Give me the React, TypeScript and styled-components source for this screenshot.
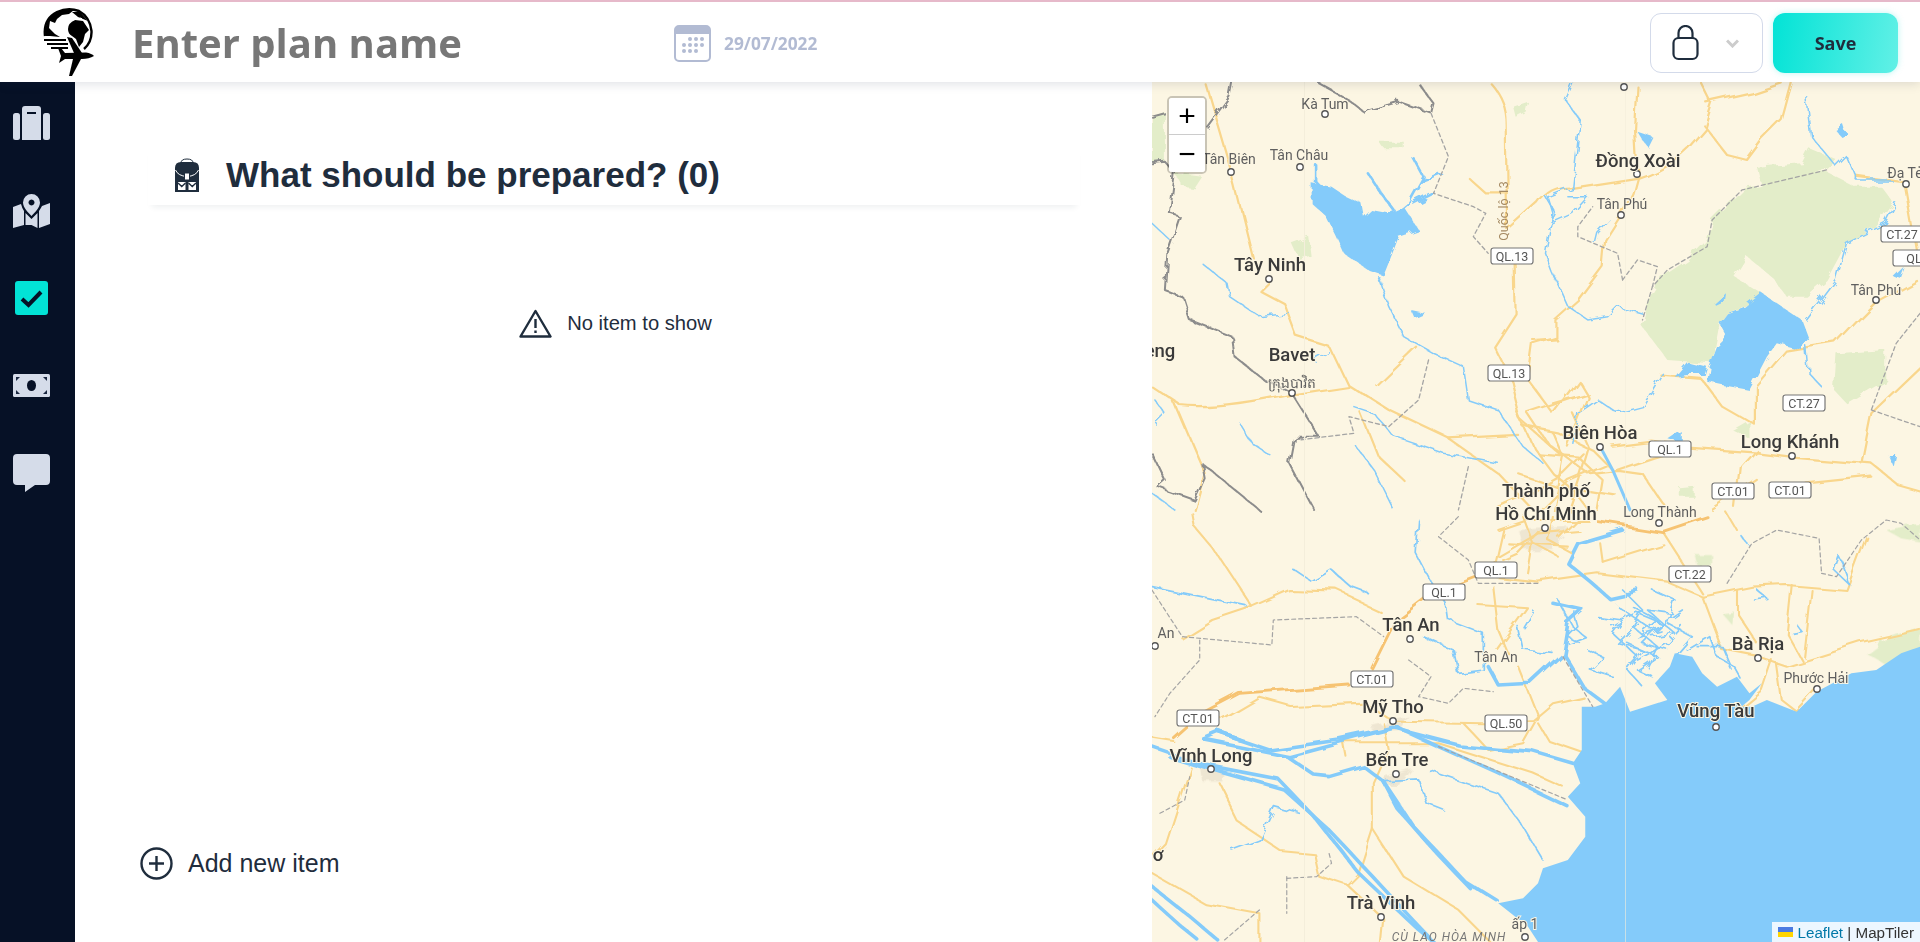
import styled, { createGlobalStyle } from "styled-components";

const GlobalStyle = createGlobalStyle`
  html, body {
    margin: 0;
    padding: 0;
    height: 100%;
    overflow: hidden;
    background: #fff;
    font-family: "Liberation Sans", Arial, sans-serif;
  }
  * { box-sizing: border-box; }
`;

const Page = styled.div`
  display: flex;
  flex-direction: column;
  width: 100%;
  height: 942px;
`;

const Header = styled.header`
  position: relative;
  z-index: 10;
  display: flex;
  align-items: center;
  flex: 0 0 82px;
  height: 82px;
  padding: 2px 22px 0 36px;
  background: #fff;
  border-top: 2px solid #e6b9ca;
  box-shadow: 0 2px 10px rgba(30, 45, 70, 0.14);
`;

const Logo = styled.svg`
  flex: 0 0 64px;
  width: 64px;
  height: 72px;
  margin-top: -2px;
`;

const PlanName = styled.span`
  margin-left: 32px;
  width: 542px;
  font-family: "Open Sans", sans-serif;
  font-size: 40px;
  font-weight: 700;
  color: #777;
  line-height: 1;
`;

const DateBox = styled.div`
  display: flex;
  align-items: center;
  gap: 13px;
  font-family: "Open Sans", sans-serif;
  font-size: 17.3px;
  font-weight: 700;
  color: #b2bbd3;
`;

const HeaderRight = styled.div`
  display: flex;
  align-items: center;
  gap: 10px;
  margin-left: auto;
`;

const PrivacySelect = styled.div`
  display: flex;
  align-items: center;
  justify-content: space-between;
  width: 113px;
  height: 60px;
  padding: 0 23px 0 21px;
  background: #fff;
  border: 1px solid #d3daea;
  border-radius: 11px;
`;

const SaveButton = styled.button`
  width: 125px;
  height: 60px;
  border: none;
  border-radius: 12px;
  background: linear-gradient(100deg, #02e3d6 0%, #62f0e6 100%);
  box-shadow: 0 0 6px rgba(60, 230, 220, 0.35);
  font-family: "Open Sans", sans-serif;
  font-size: 18px;
  font-weight: 700;
  color: #1f2d3d;
`;

const Body = styled.div`
  display: flex;
  flex: 1;
  min-height: 0;
`;

const Sidebar = styled.nav`
  display: flex;
  flex-direction: column;
  flex: 0 0 75px;
  gap: 5.5px;
  background: #061126;
`;

const SideItem = styled.div`
  display: flex;
  align-items: center;
  justify-content: center;
  width: 63px;
  height: 82px;
`;

const Main = styled.main`
  display: flex;
  flex-direction: column;
  flex: 1;
  padding: 63px 72px 62px 73px;
  background: #fff;
  color: #1f2d3d;
`;

const TitleRow = styled.div`
  display: flex;
  align-items: center;
  gap: 27px;
  height: 60px;
  padding-left: 27px;
  box-shadow: 0 6px 6px -4px rgba(30, 45, 70, 0.08);
`;

const Title = styled.h2`
  margin: 0;
  font-size: 35px;
  font-weight: 700;
`;

const EmptyNote = styled.div`
  display: flex;
  align-items: center;
  justify-content: center;
  gap: 15px;
  margin-top: 104px;
  padding-left: 3px;
  font-size: 20.2px;
`;

const AddItem = styled.div`
  display: flex;
  align-items: center;
  gap: 15px;
  margin: auto 0 0 -8px;
  font-size: 25px;
`;

const MapPane = styled.section`
  position: relative;
  flex: 0 0 768px;
  overflow: hidden;
  background: #fcf6e3;
`;

const MapCanvas = styled.svg`
  display: block;
  width: 768px;
  height: 860px;
`;

const ZoomControl = styled.div`
  position: absolute;
  top: 14px;
  left: 15px;
  width: 40px;
  border: 2px solid rgba(0, 0, 0, 0.2);
  border-radius: 5px;
  background-clip: padding-box;
`;

const ZoomButton = styled.div<{ $first?: boolean }>`
  display: flex;
  align-items: center;
  justify-content: center;
  height: 37px;
  background: #fff;
  font-size: 30px;
  line-height: 1;
  color: #000;
  border-bottom: ${(p) => (p.$first ? "1px solid #ccc" : "none")};
  border-radius: ${(p) => (p.$first ? "3px 3px 0 0" : "0 0 3px 3px")};
`;

const Attribution = styled.div`
  position: absolute;
  right: 0;
  bottom: 0;
  display: flex;
  align-items: center;
  gap: 4px;
  height: 20px;
  padding: 0 6px;
  background: rgba(255, 255, 255, 0.85);
  font-size: 15.2px;
  color: #333;
`;

const LeafletLink = styled.span`
  color: #0078a8;
`;

const CityLabel = styled.text<{ $big?: boolean }>`
  font-family: Roboto, "Noto Sans", sans-serif;
  font-size: ${(p) => (p.$big ? "18.5px" : "14px")};
  font-weight: ${(p) => (p.$big ? 500 : 400)};
  fill: ${(p) => (p.$big ? "#3a3a3a" : "#5f5f5f")};
  text-anchor: middle;
  paint-order: stroke;
  stroke: #fcf6e3;
  stroke-width: 2px;
`;

const ShieldText = styled.text`
  font-family: Roboto, "Noto Sans", sans-serif;
  font-size: 12.5px;
  fill: #555;
  text-anchor: middle;
`;

const WATER = "#84cbfa";
const ROAD = "#f9d68c";
const HIGHWAY = "#f6c372";
const BORDER = "#8c8c8c";

// coordinates below were read off the map zooms, the two groups scale them back to page space
const TOP = "translate(1140 80) scale(.4975 .3333)";
const BOTTOM = "translate(1140 510) scale(.4975 .3333)";

const greensTop = [
  "M1010 740 L1030 640 L1050 590 L1100 540 L1140 480 L1150 420 L1210 330 L1380 275 L1440 320 L1490 320 L1515 370 L1480 440 L1420 490 L1380 600 L1340 650 L1300 650 L1270 590 L1220 530 L1195 590 L1260 650 L1180 700 L1165 730 L1150 850 L1060 840 Z",
  "M1400 820 L1500 810 L1500 900 L1420 970 L1395 930 Z",
  "M24 110 L50 95 L50 245 L24 250 Z",
  "M70 280 L125 290 L110 325 L85 320 Z",
  "M305 490 L340 470 L345 530 L320 540 Z",
  "M480 185 L530 185 L530 205 L490 205 Z",
  "M750 80 L780 65 L775 95 L755 110 Z",
  "M1240 260 L1330 250 L1345 205 L1400 240 L1380 270 L1300 320 L1250 320 Z",
  "M1190 1050 L1225 1020 L1225 1075 Z",
  "M1085 1225 L1115 1220 L1115 1250 L1085 1250 Z",
];

const greensBottom = [
  "M1460 430 L1500 385 L1568 350 L1568 425 L1500 465 Z",
  "M1500 60 L1568 40 L1568 95 L1530 85 Z",
  "M1115 135 L1150 135 L1150 165 L1120 165 Z",
  "M1170 310 L1195 305 L1190 345 Z",
];

const lakesTop = [
  "M345 310 L385 320 L410 345 L445 370 L450 410 L465 390 L500 400 L530 380 L560 450 L520 470 L510 510 L490 585 L460 570 L410 520 L395 470 L375 410 L345 370 Z",
  "M1180 700 L1215 680 L1250 640 L1290 680 L1330 720 L1345 780 L1330 810 L1280 790 L1260 830 L1225 930 L1170 915 L1140 905 L1145 860 L1160 800 L1180 770 L1165 730 Z",
  "M1075 890 L1100 845 L1140 860 L1135 885 L1100 885 Z",
  "M1000 155 L1030 170 L1020 200 L1010 180 Z",
  "M1398 150 L1415 135 L1420 160 L1408 168 Z",
  "M1155 670 L1178 640 L1175 670 L1160 680 Z",
  "M545 690 L575 700 L552 715 Z",
  "M1060 1075 L1085 1050 L1085 1085 Z",
  "M1505 1125 L1520 1125 L1515 1160 Z",
  "M1515 590 L1535 560 L1525 600 Z",
];

const lakeArms = [
  "M350 250 L350 300 L400 380",
  "M458 280 L480 330 L510 390",
  "M550 235 L570 290 L540 370 L500 420",
  "M605 280 L570 300",
  "M590 340 L550 370",
];

const riversTop = [
  "M870 10 L855 60 L885 120 L875 250 L870 320 L820 350 L830 400 L815 520 L830 580 L860 680 L900 720 L940 710 L960 680 L1010 700",
  "M480 590 L500 680 L530 770 L590 820 L650 860 L660 960 L720 990 L770 1100 L810 1150",
  "M125 550 L175 610 L180 650 L240 710 L300 700",
  "M200 1030 L225 1090 L265 1130",
  "M430 980 L470 1000 L510 1070 L610 1120 L720 1150",
  "M435 1100 L470 1170 L510 1290",
  "M24 430 L60 480",
  "M30 960 L50 1000 L30 1030",
  "M1050 880 L1010 980 L960 1000 L920 960 L880 1000 L870 1090",
  "M1340 800 L1345 880 L1370 920",
  "M1340 720 L1400 600 L1420 490 L1500 430 L1520 370",
  "M1340 50 L1350 170 L1400 260 L1420 230 L1440 300 L1510 300",
  "M24 1240 L70 1290",
  "M815 350 L835 400 L820 445",
  "M860 350 L900 350 L870 400 L825 430",
  "M945 420 L920 460 L915 490",
  "M380 815 L350 840",
];

const roadsTop = [
  "M705 10 Q735 60 735 130 L738 440",
  "M740 450 L800 370 Q825 315 870 320 L1000 290 Q1060 260 1100 200 L1135 140 L1150 70 L1130 10",
  "M1000 285 L990 340 L967 405 L935 480 L930 560 L880 660 L835 720 L835 770 L790 790 L780 900 L830 1000",
  "M753 550 L755 700 L712 800 L745 900 L765 1020 L850 1130",
  "M130 10 L185 290 L225 530",
  "M260 600 L240 630 L290 670 L315 770 L380 800 L415 910 L500 990 L620 1075 L720 1180 L790 1290",
  "M24 920 L80 975 Q150 990 305 940 L415 915",
  "M475 915 L555 800",
  "M1130 130 L1180 225 L1220 240 L1250 180 L1290 120 L1310 10",
  "M1140 70 L1230 40 L1290 10",
  "M1000 20 L995 150 L1000 285",
  "M1050 890 L1130 900 L1170 980 L1240 1040 L1240 920 L1300 815 L1400 790 L1450 710 L1480 665 L1560 600",
  "M1310 1128 L1240 1115 L1100 1100 L1030 1085 L950 1100",
  "M1310 1130 L1470 1150 L1520 1210 L1568 1230",
  "M1200 1290 L1210 1160 L1240 1110",
  "M1568 550 L1540 310 L1440 290",
  "M1450 1150 L1470 1000 L1568 860",
  "M830 1000 L880 900 L900 950 L860 1100",
  "M620 1075 L760 1065",
  "M790 780 L835 775",
  "M665 300 L695 340 L735 340",
  "M70 970 L130 1180 L110 1290",
  "M445 1000 L480 1130 L530 1200",
  "M830 970 L900 940 L780 1000 L820 1090 L900 1180 L960 1170 L1010 1180 L1060 1290",
  "M760 1000 L790 1100 L830 1180 L870 1230 L900 1290",
  "M890 1120 L850 1180 L780 1240 L720 1280",
  "M950 1170 L1030 1130 L1100 1100",
  "M1150 1290 L1240 1200",
  "M1340 1210 L1470 1190",
  "M770 1040 L840 1060 L910 1110 L950 1170",
  "M800 1120 L880 1130 L930 1200 L920 1290",
  "M830 1060 L850 1130 L830 1290",
  "M870 1000 L900 1100 L880 1200 L860 1290",
  "M760 1180 L840 1220 L960 1250",
  "M800 1290 L860 1200 L940 1150",
];

const bordersTop = [
  "M560 10 L590 70 L585 100 L520 65 L450 95 L420 60 L360 10",
  "M185 10 L180 50 L135 140",
  "M70 280 L60 400 L80 410 L55 520 L50 630 L85 650 L100 720 L185 770 L190 830 L250 900 L305 940 L360 1070 L310 1070 L300 1150 L350 1290",
  "M24 1120 L50 1200 L35 1220 L110 1260 L130 1195 L125 1150 L240 1290",
  "M24 110 L50 100 M24 250 L50 245 L70 280",
];

const dashedTop = [
  "M585 100 L620 230 L590 340 L670 380 L695 400 L670 470 L700 520",
  "M1380 270 L1210 330 L1150 420 L1140 500 L1060 570 L1030 620 L1010 720",
  "M970 600 L960 520 L880 470 L880 440 L910 380",
  "M970 600 L1000 540 L1040 560 L1030 620",
  "M580 840 L560 960 L500 1040 L420 1010 L430 1060 L320 1080",
  "M660 1160 L640 1290",
  "M1470 990 L1568 1040",
  "M1568 700 L1520 790 L1470 990",
];

const sea =
  "M888 590 L915 590 L935 580 L965 530 L985 605 L1060 570 L1035 520 L1065 470 L1075 430 L1110 440 L1130 490 L1160 530 L1200 500 L1225 550 L1250 520 L1225 570 L1185 620 L1165 685 L1130 640 L1110 590 L1230 590 L1260 570 L1320 605 L1360 545 L1430 490 L1480 480 L1530 430 L1568 410 L1568 1296 L800 1296 L780 1250 L720 1180 L770 1165 L800 1120 L810 1075 L860 1050 L895 980 L895 920 L860 860 L885 820 L870 760 L888 720 Z";

const thickRivers = [
  "M130 690 L300 740 L450 680 L520 655 L600 710 L720 790 L860 890",
  "M160 670 L260 720 L400 690 L510 655 L640 705 L790 725 L870 760",
  "M24 710 L140 770 L280 810 L350 920 L440 1090 L560 1260 L590 1296",
  "M60 740 L170 790 L290 840 L380 960 L480 1120 L580 1280",
  "M300 745 L350 795 L380 800 L450 770 L490 815 L550 950 L650 1110 L720 1175",
  "M490 815 L520 900 L590 1020 L660 1130",
  "M24 1130 L100 1220 L160 1296",
  "M24 1170 L90 1260 L120 1296",
  "M860 340 L850 430 L785 520 L720 525 L700 470",
  "M850 430 L890 530 L935 580",
  "M970 60 L880 100 L860 160 L905 215 L940 260 L1000 240",
  "M830 280 L890 300 L860 340",
  "M130 690 L160 670 L200 690",
];

const riversBottom = [
  "M580 780 L720 850 L770 950 L810 1050",
  "M490 815 L560 810 L575 880 L610 900",
  "M24 232 L215 290",
  "M305 175 L345 215 L385 180 L420 225 L455 245",
  "M560 30 L555 130 L585 215 L615 280 L620 330 L690 370 L690 480 L640 490 L630 420 L570 380",
  "M185 1020 L240 990 L270 890 L320 910",
  "M840 270 L870 350 L895 380 L860 400",
  "M920 320 L970 330 L950 370 L1000 440 L980 480 L1010 530",
  "M970 240 L1010 300 L990 350 L1040 410 L1020 470",
  "M1030 240 L1075 270 L1060 340 L1110 380 L1075 440",
  "M1100 420 L1145 380 L1160 440 L1195 470 L1210 510",
  "M900 420 L930 440 L905 480 L950 500",
  "M990 290 L1040 330 L1000 380 L1045 360",
  "M1000 340 L960 400 L1010 420 L985 460",
  "M1070 310 L1020 300 L1075 370 L1030 380",
  "M950 350 L1000 310 L1050 340 L1010 400 L1060 420",
  "M980 400 L1040 440 L1000 480 L1030 500",
  "M960 290 L1030 360 L1090 300",
  "M1000 450 L1060 400 L1090 350",
  "M870 300 L880 350 L860 380 L885 400",
  "M1120 410 L1170 410 L1190 480",
  "M1210 80 L1220 100",
  "M1240 240 L1260 265 L1235 270",
  "M1320 345 L1330 365 L1312 370",
  "M1405 140 L1395 180 L1430 230 L1415 170 Z",
  "M760 350 L770 420 L830 430",
  "M790 300 L770 350",
];

const roadsBottom = [
  "M110 50 L150 120 L225 290 L300 240 L400 245 L480 300",
  "M225 290 L145 330 L85 385",
  "M160 630 L240 560 L300 585 L450 575 L510 635 L690 640 L790 630 L830 580 L890 560",
  "M680 195 L800 215 L920 190 L1060 215 L1130 260 L1170 420 L1240 440 L1300 470 L1450 400 L1568 360",
  "M1130 260 L1230 230 L1300 225 L1420 240 L1460 80",
  "M1200 240 L1200 310 L1240 400",
  "M1310 225 L1300 370 L1330 450",
  "M1350 240 L1335 440",
  "M1270 450 L1250 540 L1160 650",
  "M1280 460 L1290 570 L1320 605 L1360 540",
  "M710 230 L720 360 L740 430",
  "M680 285 L780 295 L720 420",
  "M760 470 L800 620 L770 700 L700 720 L650 640",
  "M800 640 L820 690 L888 725",
  "M410 700 L600 700 L790 790 L850 830",
  "M410 700 L415 740",
  "M490 640 L500 720 L470 820 L470 960 L530 1100 L640 1200 L700 1290",
  "M470 960 L440 1100 L420 1130 L485 1220 L480 1296",
  "M160 820 L200 940 L280 1020 L350 1030 L360 1100 L420 1130",
  "M100 770 L50 1000 L24 1040",
  "M24 1090 L130 1180 L240 1210 L240 1296",
  "M1050 65 L1130 250",
  "M930 155 L1050 100",
  "M925 100 L930 155",
  "M720 140 L800 70 L880 60",
  "M710 190 L730 60",
  "M790 100 L780 190",
  "M810 50 L760 130 L730 150",
  "M740 100 L860 110",
  "M1180 10 L1200 60",
  "M110 50 L105 10",
  "M24 680 L65 690",
  "M770 20 L790 100 L840 140",
  "M830 20 L820 90 L870 130",
  "M880 20 L840 80",
  "M720 60 L780 30 L900 30",
];

const highwaysBottom = [
  "M470 480 L520 330 L600 240 L680 195",
  "M920 35 L1050 65 L1140 20",
  "M65 680 L110 620 L200 550 L420 525",
];

const dashedBottom = [
  "M24 240 L85 380 L265 405 L268 330 L435 320 L490 380",
  "M120 390 L120 450 L60 550 L30 620",
  "M640 20 L600 80 L660 150 L680 220 L800 220",
  "M540 450 L585 500 L560 560 L620 580 L650 535 L710 545",
  "M850 440 L910 590",
  "M295 1100 L295 1210",
  "M295 1105 L355 1100 L385 1060 L380 1030",
  "M1180 220 L1230 100 L1280 60 L1365 85 L1370 190",
  "M1370 190 L1400 200 L1450 90 L1500 30 L1530 40 L1568 90",
  "M600 710 L860 870",
  "M40 910 L90 870 L100 800",
  "M240 1200 L170 1290",
];

const urbanBottom = [
  "M460 650 L540 620 L520 660 L470 665 Z",
  "M120 770 L170 770 L165 815 L125 815 Z",
  "M490 800 L545 775 L520 825 L495 825 Z",
  "M760 60 L860 50 L830 120 L770 120 Z",
];

// x, y are the label's baseline centre in page pixels
const cities: { name: string; x: number; y: number; big?: boolean }[] = [
  { name: "Kà Tum", x: 1325, y: 109 },
  { name: "Tân Biên", x: 1229, y: 164 },
  { name: "Tân Châu", x: 1299, y: 160 },
  { name: "Đồng Xoài", x: 1638, y: 167, big: true },
  { name: "Tân Phú", x: 1622, y: 209 },
  { name: "Đạ Tẻ", x: 1905, y: 178 },
  { name: "Tây Ninh", x: 1270, y: 271, big: true },
  { name: "Tân Phú", x: 1876, y: 295 },
  { name: "Bavet", x: 1292, y: 361, big: true },
  { name: "ក្រុងបាវិត", x: 1292, y: 388 },
  { name: "Biên Hòa", x: 1600, y: 439, big: true },
  { name: "Long Khánh", x: 1790, y: 448, big: true },
  { name: "Thành phố", x: 1546, y: 497, big: true },
  { name: "Hồ Chí Minh", x: 1546, y: 520, big: true },
  { name: "Long Thành", x: 1660, y: 517 },
  { name: "Tân An", x: 1411, y: 631, big: true },
  { name: "Tân An", x: 1496, y: 662 },
  { name: "Bà Rịa", x: 1758, y: 650, big: true },
  { name: "Phước Hải", x: 1816, y: 683 },
  { name: "Mỹ Tho", x: 1393, y: 713, big: true },
  { name: "Vũng Tàu", x: 1716, y: 717, big: true },
  { name: "Vĩnh Long", x: 1211, y: 762, big: true },
  { name: "Bến Tre", x: 1397, y: 766, big: true },
  { name: "Trà Vinh", x: 1381, y: 909, big: true },
  { name: "ấp 1", x: 1525, y: 929 },
  { name: "eng", x: 1160, y: 357, big: true },
  { name: "An", x: 1166, y: 638 },
  { name: "ơ", x: 1158, y: 861, big: true },
];

const dots = [
  [1624, 87], [1325, 114], [1231, 172], [1300, 167], [1637, 174], [1621, 215],
  [1906, 184], [1269, 279], [1876, 300], [1292, 393], [1600, 447], [1792, 456],
  [1545, 528], [1659, 523], [1155, 646], [1410, 639], [1758, 658], [1817, 689],
  [1716, 727], [1393, 721], [1211, 769], [1396, 774], [1381, 917], [1525, 937],
];

const shields: { name: string; x: number; y: number }[] = [
  { name: "QL.13", x: 1512, y: 256 },
  { name: "QL.13", x: 1509, y: 373 },
  { name: "CT.27", x: 1902, y: 234 },
  { name: "QL", x: 1914, y: 258 },
  { name: "CT.27", x: 1804, y: 403 },
  { name: "QL.1", x: 1670, y: 449 },
  { name: "CT.01", x: 1733, y: 491 },
  { name: "CT.01", x: 1790, y: 490 },
  { name: "QL.1", x: 1496, y: 570 },
  { name: "QL.1", x: 1444, y: 592 },
  { name: "CT.22", x: 1690, y: 574 },
  { name: "CT.01", x: 1372, y: 679 },
  { name: "CT.01", x: 1198, y: 718 },
  { name: "QL.50", x: 1506, y: 723 },
];

function Lines({ items, color, width, dash }: { items: string[]; color: string; width: number; dash?: string }) {
  return (
    <>
      {items.map((d) => (
        <path
          key={d}
          d={d}
          fill="none"
          stroke={color}
          strokeWidth={width}
          strokeLinejoin="round"
          strokeLinecap="round"
          strokeDasharray={dash}
          vectorEffect="non-scaling-stroke"
        />
      ))}
    </>
  );
}

function Fills({ items, color }: { items: string[]; color: string }) {
  return (
    <>
      {items.map((d) => (
        <path key={d} d={d} fill={color} />
      ))}
    </>
  );
}

function MapDrawing() {
  return (
    <MapCanvas viewBox="1152 82 768 860">
      <defs>
        <filter id="wiggle" filterUnits="userSpaceOnUse" x="1152" y="82" width="768" height="860">
          <feTurbulence type="fractalNoise" baseFrequency=".09" numOctaves="2" seed="4" result="n" />
          <feDisplacementMap in="SourceGraphic" in2="n" scale="9" />
        </filter>
        <filter id="bend" filterUnits="userSpaceOnUse" x="1152" y="82" width="768" height="860">
          <feTurbulence type="fractalNoise" baseFrequency=".025" numOctaves="2" seed="9" result="n" />
          <feDisplacementMap in="SourceGraphic" in2="n" scale="12" />
        </filter>
      </defs>
      <rect x="1152" y="82" width="768" height="860" fill="#fcf6e3" />
      <g filter="url(#wiggle)">
        <g transform={TOP}>
          <Fills items={greensTop} color="#e3edc9" />
        </g>
        <g transform={BOTTOM}>
          <Fills items={greensBottom} color="#e3edc9" />
          <Fills items={urbanBottom} color="#eee6d2" />
        </g>
      </g>
      <g filter="url(#bend)">
        <g transform={TOP}>
          <Lines items={roadsTop} color={ROAD} width={2.2} />
        </g>
        <g transform={BOTTOM}>
          <Lines items={roadsBottom} color={ROAD} width={2.1} />
          <Lines items={highwaysBottom} color={HIGHWAY} width={2.8} />
        </g>
      </g>
      <g filter="url(#wiggle)">
        <g transform={TOP}>
          <Lines items={riversTop} color={WATER} width={1.5} />
          <Lines items={lakeArms} color={WATER} width={2.6} />
          <Fills items={lakesTop} color={WATER} />
          <Lines items={bordersTop} color={BORDER} width={2} />
        </g>
        <g transform={BOTTOM}>
          <Lines items={riversBottom} color={WATER} width={1.7} />
        </g>
      </g>
      <g filter="url(#bend)">
        <g transform={BOTTOM}>
          <Lines items={thickRivers} color={WATER} width={3.6} />
        </g>
      </g>
      <g transform={TOP}>
        <Lines items={["M925 1100 L950 1170 L985 1290"]} color={WATER} width={3} />
        <Lines items={dashedTop} color="#a4a4a4" width={1.3} dash="4 3" />
      </g>
      <g transform={BOTTOM}>
        <path d={sea} fill={WATER} />
        <Lines items={dashedBottom} color="#a4a4a4" width={1.2} dash="4 3" />
      </g>
      <line x1="1304.5" y1="82" x2="1304.5" y2="942" stroke="#f4eedb" />
      <line x1="1625.5" y1="82" x2="1625.5" y2="942" stroke="#f4eedb" opacity=".6" />
      <text x="1508" y="211" transform="rotate(-90 1508 211)" textAnchor="middle" fontFamily="Roboto, sans-serif" fontSize="12.5" fill="#a58a63">
        Quốc lộ 13
      </text>
      <text x="1449" y="941" textAnchor="middle" fontFamily="Roboto, sans-serif" fontSize="12" fontStyle="italic" fill="#777" letterSpacing="1">
        CÙ LAO HÒA MINH
      </text>
      {shields.map((s) => (
        <g key={`${s.name}${s.x}`}>
          <rect x={s.x - 21} y={s.y - 8} width={42} height={16} rx={2.5} fill="#fff" stroke="#777" strokeWidth={1.2} />
          <ShieldText x={s.x} y={s.y + 4.5}>{s.name}</ShieldText>
        </g>
      ))}
      {dots.map(([x, y]) => (
        <circle key={`${x}-${y}`} cx={x} cy={y} r={3.2} fill="#fff" stroke="#555" strokeWidth={1.4} />
      ))}
      {cities.map((c) => (
        <CityLabel key={`${c.name}${c.x}`} x={c.x} y={c.y} $big={c.big}>
          {c.name}
        </CityLabel>
      ))}
    </MapCanvas>
  );
}

function App() {
  return (
    <Page>
      <GlobalStyle />
      <Header>
        <Logo viewBox="0 0 64 72">
          <path d="M9 30 Q7 13 21 6 Q32 1 43 5 Q54 11 55.5 25 Q56 36 48 43" fill="none" stroke="#000" strokeWidth="2.4" />
          <path d="M9.5 30 Q8 13 21 6 Q30 2 38 4 L33 8 L26 9 L21 13 L19 17 L14 15 L13 22 L19 28 L24 31 L14 30 Z" fill="#000" />
          <path d="M36 6 L44 6 L52 15 L42 11 Z" fill="#000" />
          <path d="M32 23 Q32 17 39 14 L47 15 L53 24 L49 28 L47 36 L43 41 L40 33 L36 30 Q32 28 32 23 Z" fill="#000" />
          <path d="M37 14 L45 12 L49 16" fill="none" stroke="#fff" strokeWidth="1" />
          <rect x="8" y="33" width="22" height="2" />
          <rect x="11" y="37" width="21" height="2" />
          <rect x="15" y="41" width="17" height="2" />
          <path d="M22 42 L25 42 L29 47 L50 46.5 Q56 47.5 58 50 Q53 53 46 53 L29 53 L23 57 L25 50 Z" fill="#000" />
          <path d="M31 31 L36 32 L46 47 L38 47 Z" fill="#000" />
          <path d="M37 53 L45 53 L36 70 L33 70 Z" fill="#000" />
        </Logo>
        <PlanName>Enter plan name</PlanName>
        <DateBox>
          <svg width="37" height="37" viewBox="0 0 37 37">
            <rect x="1" y="1" width="35" height="35" rx="4" fill="#fff" stroke="#b2bbd3" strokeWidth="2" />
            <path d="M1 5 Q1 1 5 1 H32 Q36 1 36 5 V9 H1 Z" fill="#b2bbd3" />
            {[[16, 14], [22, 14], [28, 14], [10, 20], [16, 20], [22, 20], [28, 20], [10, 26], [16, 26], [22, 26]].map(([x, y]) => (
              <circle key={`${x}-${y}`} cx={x} cy={y} r="2" fill="#b2bbd3" />
            ))}
          </svg>
          29/07/2022
        </DateBox>
        <HeaderRight>
          <PrivacySelect>
            <svg width="27" height="36" viewBox="0 0 27 36" fill="none" stroke="#1f2d3d" strokeWidth="2.2">
              <rect x="1.5" y="13" width="24" height="21" rx="5" />
              <path d="M6.5 13 V8 a7 7 0 0 1 14 0 V13" />
            </svg>
            <svg width="13" height="9" viewBox="0 0 13 9" fill="none" stroke="#ccc" strokeWidth="3">
              <path d="M1 1.5 L6.5 7 L12 1.5" />
            </svg>
          </PrivacySelect>
          <SaveButton>Save</SaveButton>
        </HeaderRight>
      </Header>
      <Body>
        <Sidebar>
          <SideItem>
            <svg width="37" height="34" viewBox="0 0 37 34" fill="#d5dce9">
              <rect x="0" y="7" width="7" height="27" rx="2.5" />
              <rect x="30" y="7" width="7" height="27" rx="2.5" />
              <path d="M9 3 Q9 0 12 0 H25 Q28 0 28 3 V34 H9 Z" />
              <rect x="14" y="6" width="9" height="2" fill="#061126" />
            </svg>
          </SideItem>
          <SideItem>
            <svg width="37" height="34" viewBox="0 0 37 34" fill="#d5dce9">
              <path d="M18.5 0 a8.5 8.5 0 0 1 8.5 8.5 c0 5 -5 10 -8.5 13.5 c-3.5 -3.5 -8.5 -8.5 -8.5 -13.5 a8.5 8.5 0 0 1 8.5 -8.5 Z M18.5 5.5 a3 3 0 1 0 0.01 0 Z" fillRule="evenodd" />
              <path d="M0 13 L8 10 Q9 14 11 17 V31 L0 34 Z" />
              <path d="M12.5 19 L18.5 25 L24.5 19 V34 L18.5 31 L12.5 31 Z" />
              <path d="M26 17 Q28 14 29 12 L37 9 V30 L26 34 Z" />
            </svg>
          </SideItem>
          <SideItem>
            <svg width="33" height="34" viewBox="0 0 33 34">
              <rect width="33" height="34" rx="3" fill="#02e3d6" />
              <path d="M7 18 L13.5 24 L26 11" fill="none" stroke="#061126" strokeWidth="4" />
            </svg>
          </SideItem>
          <SideItem>
            <svg width="37" height="23" viewBox="0 0 37 23">
              <rect width="37" height="23" rx="1.5" fill="#d5dce9" />
              <ellipse cx="18.5" cy="11.5" rx="4.5" ry="5.5" fill="#061126" />
              <path d="M3 3 H7 L3 7 Z M34 3 H30 L34 7 Z M3 20 H7 L3 16 Z M34 20 H30 L34 16 Z" fill="#1a2740" />
            </svg>
          </SideItem>
          <SideItem>
            <svg width="37" height="38" viewBox="0 0 37 38" fill="#d5dce9">
              <path d="M4 0 H33 Q37 0 37 4 V27 Q37 31 33 31 H22 L12 38 V31 H4 Q0 31 0 27 V4 Q0 0 4 0 Z" />
            </svg>
          </SideItem>
        </Sidebar>
        <Main>
          <TitleRow>
            <svg width="24" height="34" viewBox="0 0 24 34">
              <path d="M6 5 Q6 1 12 1 Q18 1 18 5" fill="none" stroke="#1f2d3d" strokeWidth="1" />
              <path d="M0 10 Q0 4 6 4 H18 Q24 4 24 10 V34 H0 Z" fill="#1f2d3d" />
              <path d="M0.5 12 Q3 18 12 18.5 Q21 18 23.5 12" fill="none" stroke="#fff" strokeWidth="1" />
              <rect x="9.5" y="15" width="5" height="7" fill="#fff" stroke="#1f2d3d" strokeWidth="1" />
              <rect x="3" y="24" width="7.5" height="8" fill="#fff" />
              <rect x="13.5" y="24" width="7.5" height="8" fill="#fff" />
              <path d="M3 25 L6.75 28.5 L10.5 25 M13.5 25 L17.25 28.5 L21 25" fill="none" stroke="#1f2d3d" strokeWidth="1.4" />
            </svg>
            <Title>What should be prepared? (0)</Title>
          </TitleRow>
          <EmptyNote>
            <svg width="33" height="29" viewBox="0 0 33 29" fill="none" stroke="#1f2d3d" strokeWidth="2.4" strokeLinejoin="round">
              <path d="M16.5 2 L31.5 27.5 H1.5 Z" />
              <path d="M16.5 10 V19 M16.5 21.5 V24" />
            </svg>
            No item to show
          </EmptyNote>
          <AddItem>
            <svg width="33" height="33" viewBox="0 0 33 33" fill="none" stroke="#1f2d3d" strokeWidth="2.4">
              <circle cx="16.5" cy="16.5" r="15" />
              <path d="M16.5 9 V24 M9 16.5 H24" />
            </svg>
            Add new item
          </AddItem>
        </Main>
        <MapPane>
          <MapDrawing />
          <ZoomControl>
            <ZoomButton $first>+</ZoomButton>
            <ZoomButton>−</ZoomButton>
          </ZoomControl>
          <Attribution>
            <svg width="15" height="10" viewBox="0 0 15 10">
              <rect width="15" height="5" fill="#4c7be1" />
              <rect y="5" width="15" height="5" fill="#ffd500" />
            </svg>
            <span>
              <LeafletLink>Leaflet</LeafletLink> | MapTiler
            </span>
          </Attribution>
        </MapPane>
      </Body>
    </Page>
  );
}

export default App;
